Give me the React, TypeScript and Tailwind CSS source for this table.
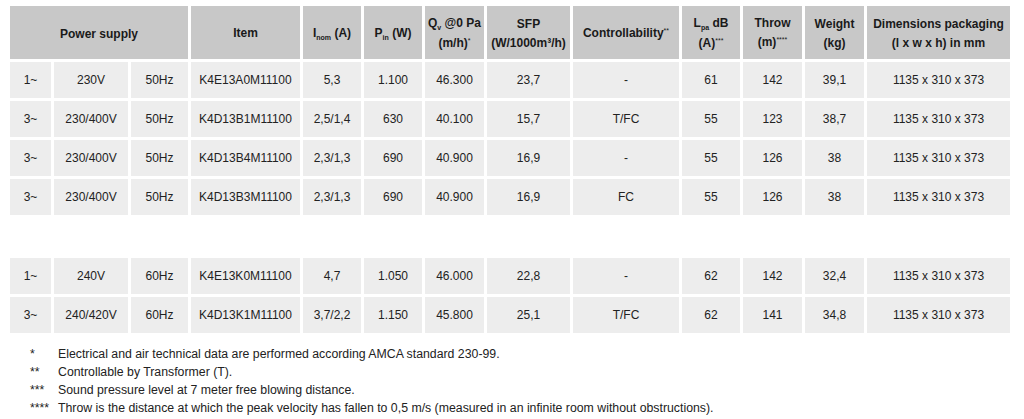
import React from 'react';

const cols =
  'grid grid-cols-[41px_74px_57px_109px_58px_58px_59px_83px_106px_58px_59px_59px_143px] gap-[3px]';

type Row = string[];

const groupA: Row[] = [
  ['1~', '230V', '50Hz', 'K4E13A0M11100', '5,3', '1.100', '46.300', '23,7', '-', '61', '142', '39,1', '1135 x 310 x 373'],
  ['3~', '230/400V', '50Hz', 'K4D13B1M11100', '2,5/1,4', '630', '40.100', '15,7', 'T/FC', '55', '123', '38,7', '1135 x 310 x 373'],
  ['3~', '230/400V', '50Hz', 'K4D13B4M11100', '2,3/1,3', '690', '40.900', '16,9', '-', '55', '126', '38', '1135 x 310 x 373'],
  ['3~', '230/400V', '50Hz', 'K4D13B3M11100', '2,3/1,3', '690', '40.900', '16,9', 'FC', '55', '126', '38', '1135 x 310 x 373'],
];

const groupB: Row[] = [
  ['1~', '240V', '60Hz', 'K4E13K0M11100', '4,7', '1.050', '46.000', '22,8', '-', '62', '142', '32,4', '1135 x 310 x 373'],
  ['3~', '240/420V', '60Hz', 'K4D13K1M11100', '3,7/2,2', '1.150', '45.800', '25,1', 'T/FC', '62', '141', '34,8', '1135 x 310 x 373'],
];

const notes = [
  ['*', 'Electrical and air technical data are performed according AMCA standard 230-99.'],
  ['**', 'Controllable by Transformer (T).'],
  ['***', 'Sound pressure level at 7 meter free blowing distance.'],
  ['****', 'Throw is the distance at which the peak velocity has fallen to 0,5 m/s (measured in an infinite room without obstructions).'],
];

const Head: React.FC<{ children: React.ReactNode }> = ({ children }) => (
  <div className="bg-[#c8c8c8] flex items-center justify-center text-center font-bold leading-[19px] text-[12px] text-[#1a1a1a] pt-[2px]">
    <div>{children}</div>
  </div>
);

const Sub: React.FC<{ children: React.ReactNode }> = ({ children }) => (
  <span className="text-[7px] relative top-[3px] font-bold">{children}</span>
);

const Sup: React.FC<{ children: React.ReactNode }> = ({ children }) => (
  <span className="text-[7px] relative -top-[4px] font-normal">{children}</span>
);

const DataRow: React.FC<{ row: Row }> = ({ row }) => (
  <>
    {row.map((v, i) => (
      <div key={i} className="bg-[#ededed] h-[36px] flex items-center justify-center text-[12px] text-[#222]">
        {v}
      </div>
    ))}
  </>
);

export default function App() {
  return (
    <div className="w-[1024px] h-[419px] bg-white pt-[6px] pl-[10px] overflow-hidden" style={{ fontFamily: '"Liberation Sans", Arial, sans-serif' }}>
      <div className={cols}>
        <div className="col-span-3 h-[53px] bg-[#c8c8c8] flex items-center justify-center font-bold text-[12px] text-[#1a1a1a] pt-[2px]">
          Power supply
        </div>
        <Head>Item</Head>
        <Head>
          I<Sub>nom</Sub> (A)
        </Head>
        <Head>
          P<Sub>in</Sub> (W)
        </Head>
        <Head>
          Q<Sub>v</Sub> @0 Pa
          <br />
          (m/h)<Sup>*</Sup>
        </Head>
        <Head>
          SFP
          <br />
          (W/1000m³/h)
        </Head>
        <Head>
          Controllability<Sup>**</Sup>
        </Head>
        <Head>
          L<Sub>pa</Sub> dB
          <br />
          (A)<Sup>***</Sup>
        </Head>
        <Head>
          Throw
          <br />
          (m)<Sup>****</Sup>
        </Head>
        <Head>
          Weight
          <br />
          (kg)
        </Head>
        <Head>
          Dimensions packaging
          <br />
          (l x w x h) in mm
        </Head>

        {groupA.map((r, i) => (
          <DataRow key={`a${i}`} row={r} />
        ))}
        <div className="col-span-13 h-[37px]" />
        {groupB.map((r, i) => (
          <DataRow key={`b${i}`} row={r} />
        ))}
      </div>

      <div className="mt-[12px] pl-[20px] text-[12.3px] text-[#222] leading-[18px]">
        {notes.map(([mark, text]) => (
          <div key={mark} className="flex">
            <div className="w-[28px]">{mark}</div>
            <div>{text}</div>
          </div>
        ))}
      </div>
    </div>
  );
}
